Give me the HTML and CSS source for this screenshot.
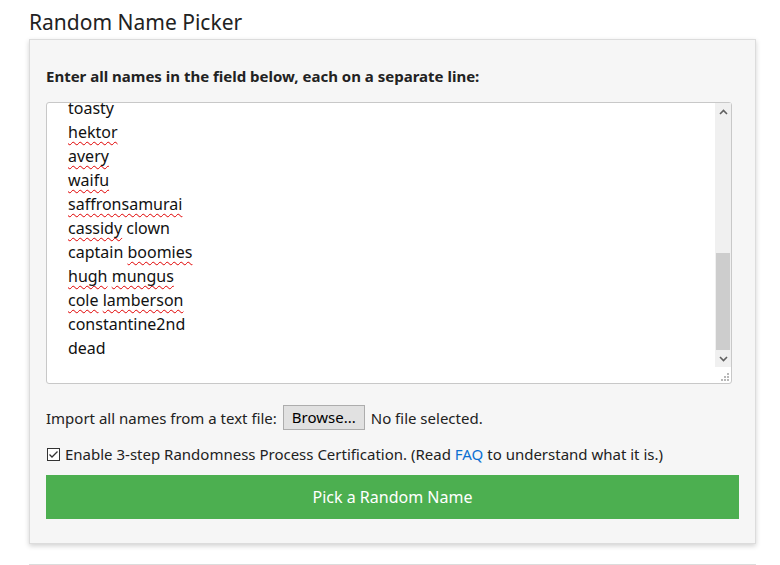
FILE: index.html
```html
<!DOCTYPE html>
<html lang="en">
<head>
  <meta charset="UTF-8" />
  <title>Random Name Picker</title>
  <link rel="stylesheet" href="styles.css">
</head>
<body>
  <div class="page">
    <h1 class="page-title">Random Name Picker</h1>
    <div class="picker-card">
      <div class="field-label">Enter all names in the field below, each on a separate line:</div>
      <div class="names-box">
        <div class="names-view">
          <div class="names-list">
            <div class="name-line">toasty</div>
            <div class="name-line"><span class="typo">hektor</span></div>
            <div class="name-line"><span class="typo">avery</span></div>
            <div class="name-line"><span class="typo">waifu</span></div>
            <div class="name-line"><span class="typo">saffronsamurai</span></div>
            <div class="name-line"><span class="typo">cassidy</span> clown</div>
            <div class="name-line">captain <span class="typo">boomies</span></div>
            <div class="name-line"><span class="typo">hugh</span> <span class="typo">mungus</span></div>
            <div class="name-line"><span class="typo">cole</span> <span class="typo">lamberson</span></div>
            <div class="name-line">constantine2nd</div>
            <div class="name-line">dead</div>
          </div>
        </div>
        <div class="names-side">
          <div class="scrollbar">
            <div class="scroll-arrow">
              <svg width="9" height="6" viewBox="0 0 9 6"><path d="M1 5L4.5 1.5L8 5" stroke="#606060" stroke-width="1.6" fill="none"/></svg>
            </div>
            <div class="scroll-track">
              <div class="scroll-thumb"></div>
            </div>
            <div class="scroll-arrow">
              <svg width="9" height="6" viewBox="0 0 9 6"><path d="M1 1L4.5 4.5L8 1" stroke="#606060" stroke-width="1.6" fill="none"/></svg>
            </div>
          </div>
          <div class="resize-grip">
            <svg width="9" height="9" viewBox="0 0 9 9" fill="#b8b8b8">
              <rect x="6" y="0" width="2" height="2"/>
              <rect x="3" y="3" width="2" height="2"/><rect x="6" y="3" width="2" height="2"/>
              <rect x="0" y="6" width="2" height="2"/><rect x="3" y="6" width="2" height="2"/><rect x="6" y="6" width="2" height="2"/>
            </svg>
          </div>
        </div>
      </div>
      <div class="import-row">
        <span>Import all names from a text file:</span>
        <span class="browse-btn">Browse...</span>
        <span>No file selected.</span>
      </div>
      <label class="check-row">
        <svg class="check-box" width="13" height="13" viewBox="0 0 13 13">
          <rect x="0.5" y="0.5" width="12" height="12" fill="#fff" stroke="#333"/>
          <path d="M2.5 6.5L5 9L10.5 3.5" stroke="#333" stroke-width="1.3" fill="none"/>
        </svg>
        <span>Enable 3-step Randomness Process Certification. (Read <a href="#" class="faq-link">FAQ</a> to understand what it is.)</span>
      </label>
      <button class="pick-btn">Pick a Random Name</button>
    </div>
    <div class="next-card"></div>
  </div>
</body>
</html>
```

FILE: styles.css
```css
html, body {
  box-sizing: border-box;
}
body {
  margin: 0;
  background: #fff;
  font-family: 'Noto Sans', 'Open Sans', Arial, sans-serif;
  color: #222;
  overflow: hidden;
}
.page {
  padding: 0 24px 0 29px;
}
.page-title {
  margin: 0;
  padding-top: 7px;
  height: 32px;
  font-size: 21px;
  font-weight: 400;
  line-height: 30px;
  color: #222;
}
.picker-card {
  background: #f6f6f6;
  border: 1px solid #dcdcdc;
  box-shadow: 0 2px 5px rgba(0, 0, 0, 0.18);
  padding: 25px 16px 24px 16px;
}
.field-label {
  font-size: 15px;
  font-weight: 700;
  line-height: 22px;
  color: #222;
  margin-bottom: 15px;
}
.names-box {
  display: flex;
  width: 686px;
  height: 282px;
  box-sizing: border-box;
  background: #fff;
  border: 1px solid #c8c8c8;
  border-radius: 3px;
}
.names-view {
  flex: 1;
  overflow: hidden;
}
.names-list {
  margin-top: -7px;
  padding-left: 21px;
}
.name-line {
  font-size: 16px;
  line-height: 24px;
  height: 24px;
  color: #111;
  white-space: nowrap;
}
.typo {
  text-decoration: underline wavy #e00000;
  text-decoration-thickness: 1px;
  text-decoration-skip-ink: none;
  text-underline-offset: 3px;
}
.names-side {
  display: flex;
  flex-direction: column;
  width: 16px;
}
.scrollbar {
  display: flex;
  flex-direction: column;
  height: 264px;
  background: #f0f0f0;
}
.scroll-arrow {
  height: 17px;
  display: flex;
  align-items: center;
  justify-content: center;
}
.scroll-track {
  flex: 1;
  display: flex;
  flex-direction: column;
  justify-content: flex-end;
}
.scroll-thumb {
  height: 97px;
  background: #cdcdcd;
  margin: 0 1px;
}
.resize-grip {
  flex: 1;
  display: flex;
  align-items: flex-end;
  justify-content: flex-end;
  padding: 0 1px 1px 0;
}
.import-row {
  display: flex;
  align-items: center;
  gap: 6px;
  margin-top: 21px;
  font-size: 15px;
  line-height: 20px;
  color: #222;
}
.browse-btn {
  display: inline-block;
  background: #e1e1e1;
  border: 1px solid #adadad;
  padding: 1px 8px 2px 8px;
  line-height: 20px;
  color: #000;
}
.check-row {
  display: flex;
  align-items: center;
  gap: 5px;
  margin-top: 14px;
  font-size: 15px;
  line-height: 20px;
  color: #222;
}
.check-box {
  display: block;
  margin-left: 1px;
}
.faq-link {
  color: #0b70d2;
  text-decoration: none;
}
.pick-btn {
  display: block;
  width: 100%;
  height: 44px;
  margin-top: 11px;
  border: none;
  background: #4caf50;
  color: #fff;
  font-family: 'Noto Sans', 'Open Sans', Arial, sans-serif;
  font-size: 16px;
  cursor: pointer;
}
.next-card {
  margin-top: 20px;
  height: 1px;
  background: #fbfbfb;
  border: 1px solid #dcdcdc;
  border-bottom: none;
}
```
